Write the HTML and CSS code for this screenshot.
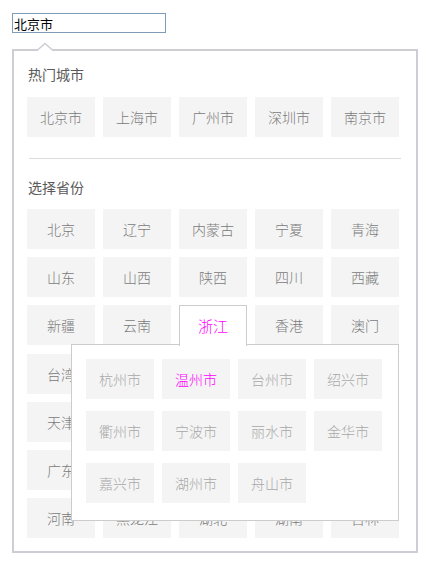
FILE: index.html
```html
<!DOCTYPE html>
<html lang="zh-CN">
<head>
<meta charset="utf-8">
<title>城市选择</title>
<link rel="stylesheet" href="styles.css">
</head>
<body>
<div class="wrap">
  <input class="city-input" type="text" value="北京市">
  <div class="panel">
    <svg class="arrow" width="20" height="10" viewBox="0 0 20 10">
      <polygon points="2,9 10,1.5 18,9" fill="#fff"/>
      <polyline points="2,8.5 10,1.5 18,8.5" fill="none" stroke="#cdcdd3" stroke-width="1.6"/>
    </svg>
    <div class="title">热门城市</div>
    <div class="grid">
      <div class="cell">北京市</div>
      <div class="cell">上海市</div>
      <div class="cell">广州市</div>
      <div class="cell">深圳市</div>
      <div class="cell">南京市</div>
    </div>
    <div class="divider"></div>
    <div class="title title-2">选择省份</div>
    <div class="grid prov">
      <div class="cell">北京</div>
      <div class="cell">辽宁</div>
      <div class="cell">内蒙古</div>
      <div class="cell">宁夏</div>
      <div class="cell">青海</div>
      <div class="cell">山东</div>
      <div class="cell">山西</div>
      <div class="cell">陕西</div>
      <div class="cell">四川</div>
      <div class="cell">西藏</div>
      <div class="cell">新疆</div>
      <div class="cell">云南</div>
      <div class="cell active">浙江</div>
      <div class="cell">香港</div>
      <div class="cell">澳门</div>
      <div class="cell">台湾</div>
      <div class="cell"></div>
      <div class="cell"></div>
      <div class="cell"></div>
      <div class="cell"></div>
      <div class="cell">天津</div>
      <div class="cell"></div>
      <div class="cell"></div>
      <div class="cell"></div>
      <div class="cell"></div>
      <div class="cell">广东</div>
      <div class="cell"></div>
      <div class="cell"></div>
      <div class="cell"></div>
      <div class="cell"></div>
      <div class="cell">河南</div>
      <div class="cell">黑龙江</div>
      <div class="cell">湖北</div>
      <div class="cell">湖南</div>
      <div class="cell">吉林</div>
    </div>
    <div class="dropdown">
      <div class="sub">
        <div class="cell light">杭州市</div>
        <div class="cell light picked">温州市</div>
        <div class="cell light">台州市</div>
        <div class="cell light">绍兴市</div>
        <div class="cell light">衢州市</div>
        <div class="cell light">宁波市</div>
        <div class="cell light">丽水市</div>
        <div class="cell light">金华市</div>
        <div class="cell light">嘉兴市</div>
        <div class="cell light">湖州市</div>
        <div class="cell light">舟山市</div>
      </div>
    </div>
  </div>
</div>
</body>
</html>
```
FILE: styles.css
```css
html, body {
  margin: 0;
  padding: 0;
  background: #fff;
}
body {
  font-family: "Noto Sans CJK SC", "Noto Sans", sans-serif;
}
.wrap {
  padding: 13px 0 0 12px;
}
.city-input {
  display: block;
  box-sizing: border-box;
  width: 154px;
  height: 20px;
  margin: 0;
  padding: 0 1px;
  border: 1px solid #7f9db9;
  font-family: "Noto Sans CJK SC", sans-serif;
  font-size: 13px;
  line-height: 18px;
  color: #000;
  outline: none;
}
.panel {
  position: relative;
  box-sizing: border-box;
  width: 406px;
  margin-top: 16px;
  padding: 13px 17px 13px 13px;
  border: 2px solid #cdcdd3;
}
.arrow {
  position: absolute;
  left: 21px;
  top: -9px;
}
.title {
  font-size: 14px;
  line-height: 20px;
  color: #5a5a5a;
  font-weight: 400;
  margin-left: 1px;
}
.title-2 {
  margin-top: 18px;
}
.grid {
  display: grid;
  grid-template-columns: repeat(5, 68px);
  gap: 8px;
  margin-top: 13px;
}
.prov {
  margin-top: 12px;
}
.cell {
  height: 40px;
  line-height: 40px;
  text-align: center;
  background: #f4f4f4;
  color: #7a7a7a;
  font-size: 14px;
  font-weight: 300;
  box-sizing: border-box;
}
.cell.active {
  position: relative;
  z-index: 2;
  height: 41px;
  background: #fff;
  border: 1px solid #cccccc;
  border-bottom: none;
  color: #ff00ff;
  font-size: 15px;
  line-height: 39px;
}
.divider {
  width: 372px;
  height: 1px;
  margin: 21px 0 0 2px;
  background: #dcdcdc;
}
.dropdown {
  position: absolute;
  z-index: 1;
  left: 57px;
  top: 293px;
  box-sizing: border-box;
  width: 328px;
  height: 177px;
  border: 1px solid #cccccc;
  background: #fff;
  padding: 14px 16px 0 14px;
}
.sub {
  display: grid;
  grid-template-columns: repeat(4, 68px);
  column-gap: 8px;
  row-gap: 12px;
}
.cell.light {
  color: #a8a8a8;
}
.cell.picked {
  color: #ff00ff;
}
```
